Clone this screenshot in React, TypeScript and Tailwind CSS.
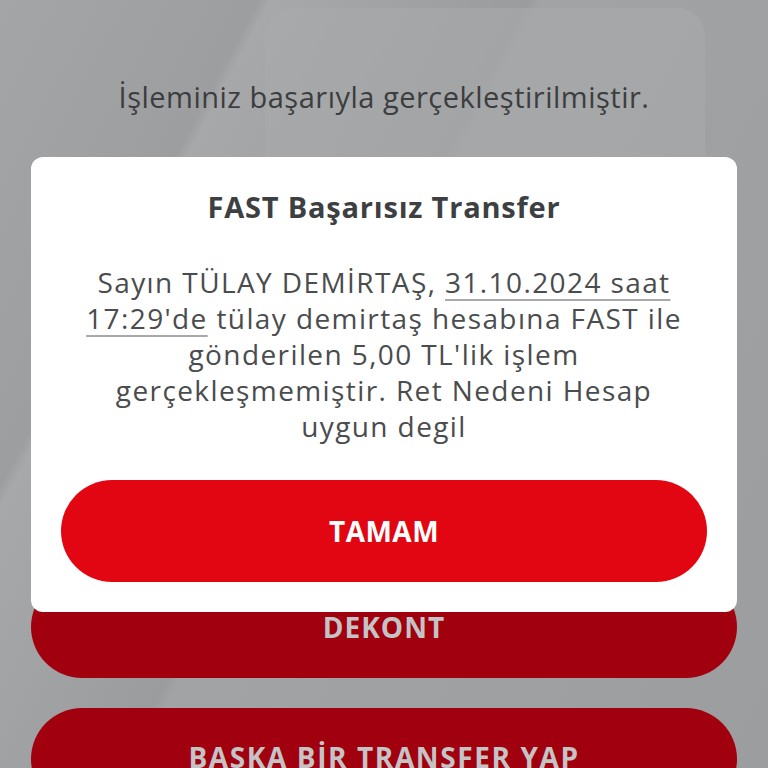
import React from 'react';

const FONT = "font-['Open_Sans','Lato',sans-serif]";

const App: React.FC = () => {
  return (
    <div className={`relative h-[768px] w-[768px] overflow-hidden bg-[linear-gradient(118deg,#a4a5a7_0%,#9d9ea0_22%,#a7a8aa_23%,#9b9c9e_45%,#a2a3a5_46%,#9c9d9f_100%)] ${FONT}`}>
      {/* decorative background panel */}
      <div className="absolute left-[265px] top-[8px] h-[540px] w-[440px] rounded-[28px] bg-[#a9aaac]/60" />

      {/* page content (dimmed by overlay) */}
      <div className="relative flex flex-col items-center px-[31px] pt-[78px]">
        <p className="text-[29px] leading-[38px] tracking-[0.5px] text-[#3b3d3f]">
          İşleminiz başarıyla gerçekleştirilmiştir.
        </p>
        <div className="mt-[460px] flex h-[102px] w-full items-center justify-center rounded-full bg-[#a1000f]">
          <span className="text-[28px] font-bold tracking-[1px] text-[#c4c4c6]">DEKONT</span>
        </div>
        <div className="mt-[30px] flex h-[102px] w-full items-start justify-center rounded-full bg-[#a1000f] pt-[28px]">
          <span className="text-[28px] font-bold tracking-[1.6px] text-[#c4c4c6]">BAŞKA BİR TRANSFER YAP</span>
        </div>
      </div>

      {/* dialog */}
      <div className="absolute left-[31px] top-[157px] flex w-[706px] flex-col items-center rounded-[12px] bg-white px-[30px] pb-[30px] pt-[30px]">
        <h2 className="text-[29px] font-bold leading-[40px] tracking-[0.8px] text-[#3d4042]">FAST Başarısız Transfer</h2>
        <p className="mt-[37px] w-[600px] text-center text-[28px] leading-[36px] tracking-[1.4px] text-[#4a4c4e]">
          Sayın TÜLAY DEMİRTAŞ,{' '}
          <span className="underline decoration-[#a8a9ab] decoration-[1.5px] underline-offset-[6px]">31.10.2024 saat 17:29'de</span>{' '}
          tülay demirtaş hesabına FAST ile gönderilen 5,00 TL'lik işlem gerçekleşmemiştir. Ret Nedeni Hesap uygun degil
        </p>
        <button className="mt-[36px] flex h-[102px] w-full items-center justify-center rounded-full bg-[#e20613]">
          <span className="text-[28px] font-bold tracking-[0.5px] text-white">TAMAM</span>
        </button>
      </div>
    </div>
  );
};

export default App;
